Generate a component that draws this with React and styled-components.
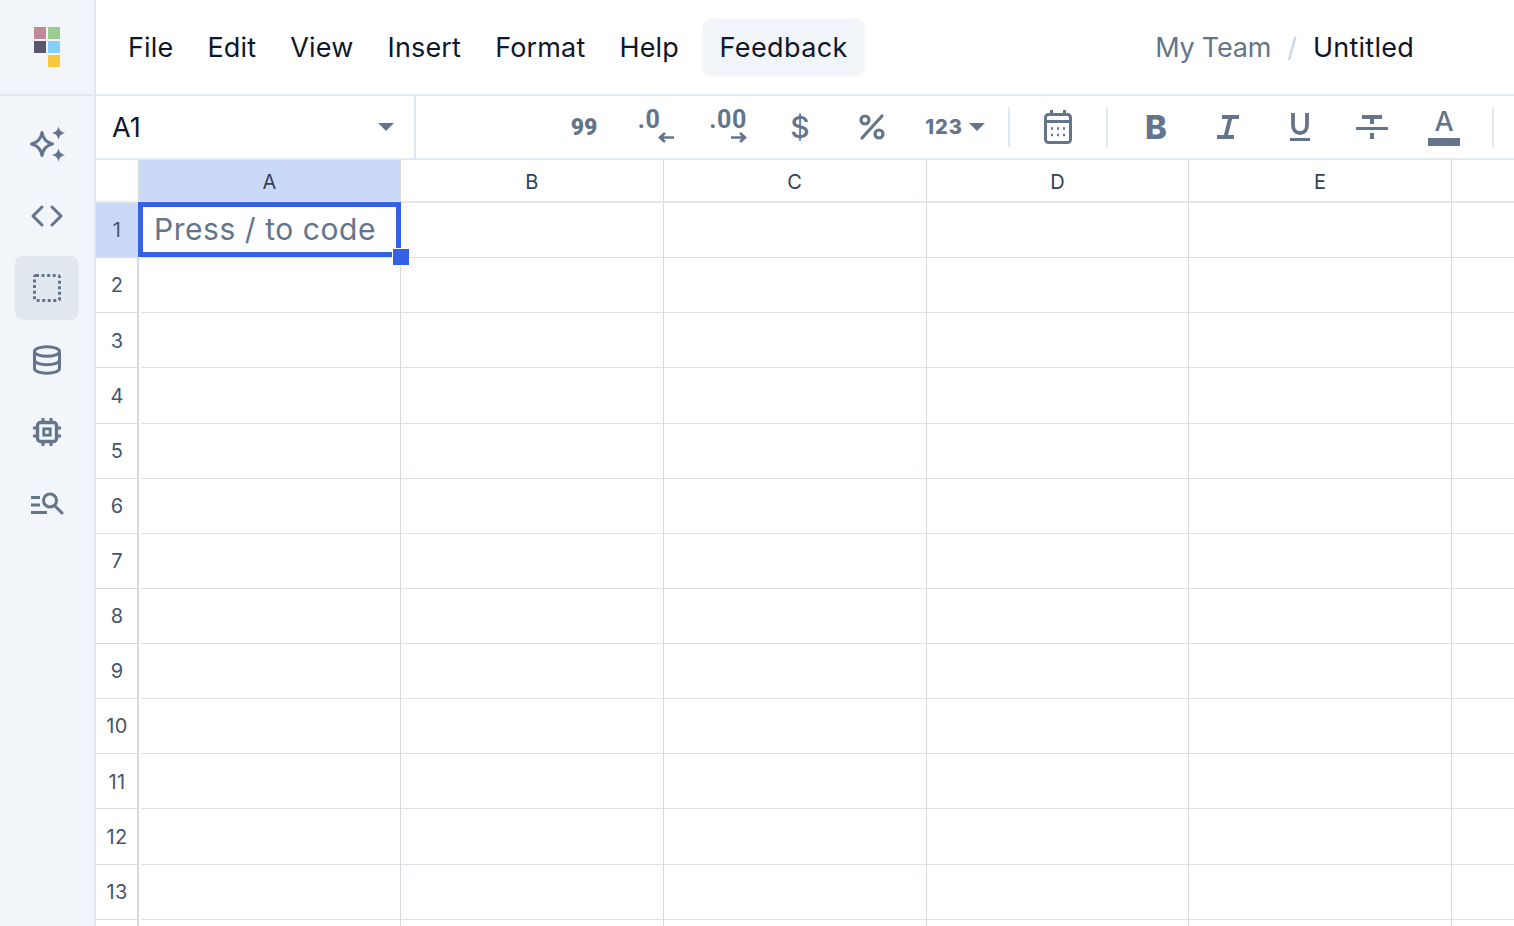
import React from 'react';
import styled, { createGlobalStyle } from 'styled-components';

const GlobalStyle = createGlobalStyle`
  html, body {
    margin: 0;
    padding: 0;
    height: 100%;
    overflow: hidden;
    background: #fff;
    font-family: Inter, "Liberation Sans", sans-serif;
  }
  * {
    box-sizing: border-box;
  }
`;

const Page = styled.div`
  display: flex;
  width: 100vw;
  height: 100vh;
  overflow: hidden;
`;

const Sidebar = styled.aside`
  flex: none;
  width: 96px;
  background: #f2f5fa;
  border-right: 2px solid #e2e8f0;
`;

const LogoArea = styled.div`
  display: flex;
  align-items: center;
  justify-content: center;
  height: 96px;
  border-bottom: 2px solid #e2e8f0;
`;

const LogoGrid = styled.div`
  display: grid;
  grid-template-columns: 12px 12px;
  grid-auto-rows: 12px;
  gap: 2px;
`;

const LogoSquare = styled.div`
  grid-column: ${(p) => p.$col || 'auto'};
  background: ${(p) => p.$color};
`;

const SideNav = styled.nav`
  display: flex;
  flex-direction: column;
  align-items: center;
  gap: 8px;
  padding-top: 16px;
`;

const SideButton = styled.div`
  display: flex;
  align-items: center;
  justify-content: center;
  width: 64px;
  height: 64px;
  border-radius: 8px;
  color: #64748b;
  background: ${(p) => (p.$active ? '#e2e8f0' : 'transparent')};
`;

const Main = styled.main`
  flex: 1;
  min-width: 0;
  display: flex;
  flex-direction: column;
`;

const TopBar = styled.header`
  flex: none;
  display: flex;
  align-items: center;
  justify-content: space-between;
  height: 96px;
  padding: 0 100px 0 15px;
  border-bottom: 2px solid #e2e8f0;
`;

const Menu = styled.div`
  display: flex;
  align-items: center;
`;

const MenuItem = styled.div`
  display: flex;
  align-items: center;
  height: 56px;
  padding: 0 17px;
  font-size: 27px;
  letter-spacing: 0.17px;
  color: #0f172a;
`;

const FeedbackButton = styled(MenuItem)`
  margin-left: 7px;
  padding: 0 16.500px;
  letter-spacing: 0.4px;
  border-radius: 8px;
  background: #f1f5f9;
  box-shadow: 0 1px 3px rgba(15, 23, 42, 0.06);
`;

const Crumbs = styled.div`
  display: flex;
  align-items: center;
  gap: 16px;
  font-size: 27px;
  color: #64748b;
`;

const CrumbTeam = styled.span`
  letter-spacing: -0.2px;
`;

const CrumbSep = styled.span`
  color: #cbd5e1;
`;

const CrumbTitle = styled.span`
  letter-spacing: 0.25px;
  color: #0f172a;
`;

const Toolbar = styled.div`
  flex: none;
  display: flex;
  align-items: center;
  height: 64px;
  border-bottom: 2px solid #e2e8f0;
`;

const NameBox = styled.div`
  flex: none;
  display: flex;
  align-items: center;
  justify-content: space-between;
  width: 320px;
  height: 100%;
  padding: 0 20px 0 16px;
  border-right: 2px solid #e2e8f0;
  font-size: 27px;
  color: #0f172a;
`;

const Caret = styled.span`
  width: 0;
  height: 0;
  border-left: 8px solid transparent;
  border-right: 8px solid transparent;
  border-top: 8px solid #64748b;
`;

const Tools = styled.div`
  display: flex;
  align-items: center;
  gap: 8px;
  padding-left: 136px;
`;

const Tool = styled.div`
  flex: none;
  display: flex;
  align-items: center;
  justify-content: center;
  gap: ${(p) => p.$gap || 0}px;
  width: ${(p) => p.$width || 64}px;
  height: 48px;
  padding-left: ${(p) => p.$inset || 0}px;
  color: #64748b;
`;

const Divider = styled.div`
  flex: none;
  width: 2px;
  height: 40px;
  margin: 0 8px;
  background: #e2e8f0;
`;

const GlyphText = styled.span`
  font-family: ${(p) => p.$font || 'Inter'}, "Liberation Sans", sans-serif;
  font-size: ${(p) => p.$size || 22}px;
  font-weight: ${(p) => p.$weight || 700};
  letter-spacing: ${(p) => p.$spacing || 0}px;
  line-height: 1;
`;

const NumberIcon = styled.div`
  display: flex;
  flex-direction: column;
  align-items: flex-end;
`;

const NumberText = styled.span`
  height: 16px;
  margin-right: ${(p) => p.$right || 0}px;
  font-family: Roboto, "Liberation Sans", sans-serif;
  font-size: 25px;
  font-weight: 700;
  letter-spacing: 0.5px;
  line-height: 16px;
`;

const ArrowIcon = styled.svg`
  display: block;
  margin-top: 4px;
`;

const TextColorIcon = styled.div`
  display: flex;
  flex-direction: column;
  align-items: center;
  width: 32px;
`;

const ColorBar = styled.div`
  width: 32px;
  height: 8px;
  margin-top: 3px;
  background: #64748b;
`;

const Sheet = styled.section`
  flex: 1;
  min-height: 0;
  overflow: hidden;
`;

const HeadRow = styled.div`
  display: flex;
  height: 43px;
  border-bottom: 2px solid #e2e8f0;
`;

const Corner = styled.div`
  flex: none;
  width: 43px;
  border-right: 1px solid #d6d9de;
`;

const ColHead = styled.div`
  flex: none;
  display: flex;
  align-items: center;
  justify-content: center;
  width: ${(p) => (p.$first ? 262 : 262.75)}px;
  padding-top: 2px;
  font-size: 20px;
  color: #334155;
  border-right: 1px solid #d6d9de;
  background: ${(p) => (p.$active ? '#cbd9f8' : 'transparent')};
`;

const Row = styled.div`
  display: flex;
  height: 55.13px;
`;

const RowHead = styled.div`
  flex: none;
  display: flex;
  align-items: center;
  justify-content: center;
  width: 43px;
  padding: 0.6px 0 0 1px;
  font-size: 20px;
  letter-spacing: 0.3px;
  color: #475569;
  border-right: 2px solid #d6d9de;
  border-bottom: 1px solid #d9dce1;
  background: ${(p) => (p.$active ? '#cbd9f8' : 'transparent')};
`;

const Cell = styled.div`
  flex: none;
  position: relative;
  width: ${(p) => (p.$first ? 262 : 262.75)}px;
  border-right: 1px solid #d6d9de;
  border-bottom: 1px solid #dcdfe4;

  /* small break in the row line right next to the row header */
  &::after {
    content: '';
    display: ${(p) => (p.$first ? 'block' : 'none')};
    position: absolute;
    left: 0;
    bottom: -1px;
    width: 2px;
    height: 1px;
    background: #fff;
  }
`;

const Filler = styled.div`
  flex: 1;
  border-bottom: 1px solid #dcdfe4;
`;

const Selection = styled.div`
  position: absolute;
  top: -1px;
  left: -1px;
  z-index: 1;
  display: flex;
  align-items: center;
  width: 263px;
  height: 55px;
  padding: 0 0 2px 11px;
  border: 5px solid #3461e6;
  font-size: 30px;
  letter-spacing: 0.55px;
  color: #64748b;
`;

const FillHandle = styled.div`
  position: absolute;
  right: -14px;
  bottom: -14px;
  width: 18px;
  height: 18px;
  background: #3461e6;
  border: 1px solid #fff;
`;

const Sparkles = () => (
  <svg width="36" height="36" viewBox="0 0 36 36" fill="none">
    <path d="M13 6.500c1 6.500 4 10 10.500 11.500C17 19.500 14 23 13 29.500 12 23 9 19.500 2.500 18 9 16.500 12 13 13 6.500z" stroke="currentColor" strokeWidth="3" strokeLinejoin="round" />
    <path d="M29.500.500c.7 3.500 2.500 5.500 6.500 6.500-4 1-5.800 3-6.500 6.500-.7-3.500-2.500-5.500-6.500-6.500 4-1 5.800-3 6.500-6.500zM29.500 22.500c.7 3.500 2.500 5.500 6.500 6.500-4 1-5.800 3-6.500 6.500-.7-3.500-2.500-5.500-6.500-6.500 4-1 5.800-3 6.500-6.500z" fill="currentColor" />
  </svg>
);

const CodeIcon = () => (
  <svg width="32" height="32" viewBox="0 0 32 32" fill="none" stroke="currentColor" strokeWidth="3" strokeLinecap="round" strokeLinejoin="round">
    <path d="M11 7l-9 9 9 9M21 7l9 9-9 9" />
  </svg>
);

const SelectIcon = () => (
  <svg width="32" height="32" viewBox="0 0 32 32" fill="none">
    <rect x="3.500" y="3.500" width="25" height="25" rx="1.500" stroke="currentColor" strokeWidth="3" strokeDasharray="3 2.550" />
  </svg>
);

const DatabaseIcon = () => (
  <svg width="32" height="32" viewBox="0 0 32 32" fill="none" stroke="currentColor" strokeWidth="3">
    <ellipse cx="16" cy="7.500" rx="12.500" ry="4.800" />
    <path d="M3.500 7.500v17c0 2.700 5.600 4.800 12.500 4.800s12.500-2.100 12.500-4.800v-17M3.500 16c0 2.700 5.600 4.800 12.500 4.800s12.500-2.100 12.500-4.800" />
  </svg>
);

const ChipIcon = () => (
  <svg width="32" height="32" viewBox="0 0 32 32" fill="none" stroke="currentColor" strokeWidth="3">
    <rect x="6.500" y="6.500" width="19" height="19" rx="3" strokeWidth="3.400" />
    <rect x="12.800" y="12.800" width="6.400" height="6.400" strokeWidth="2.800" />
    <path d="M12 2v4M20 2v4M12 26v4M20 26v4M2 12h4M2 20h4M26 12h4M26 20h4" />
  </svg>
);

const ListSearchIcon = () => (
  <svg width="36" height="32" viewBox="0 0 36 32" fill="none" stroke="currentColor" strokeWidth="3">
    <circle cx="21" cy="12.500" r="6.500" />
    <path d="M26 18l7 7" strokeLinecap="round" />
    <path d="M2 9.500h9M2 17h9M2 24.500h16" />
  </svg>
);

const ArrowLeft = () => (
  <ArrowIcon width="16" height="11" viewBox="0 0 16 11" fill="none" stroke="currentColor" strokeWidth="2.600">
    <path d="M16 5.500H2M7 1L2 5.500 7 10" />
  </ArrowIcon>
);

const ArrowRight = () => (
  <ArrowIcon width="16" height="11" viewBox="0 0 16 11" fill="none" stroke="currentColor" strokeWidth="2.600">
    <path d="M0 5.500h14M9 1l5 4.500L9 10" />
  </ArrowIcon>
);

const PercentIcon = () => (
  <svg width="32" height="32" viewBox="0 0 32 32" fill="none" stroke="currentColor" strokeWidth="3.200">
    <circle cx="9" cy="9" r="4" />
    <circle cx="23" cy="23" r="4" />
    <path d="M26 5L6 27" strokeLinecap="round" />
  </svg>
);

const CalendarIcon = () => (
  <svg width="32" height="36" viewBox="0 0 32 36" fill="none" stroke="currentColor" strokeWidth="3">
    <rect x="3.500" y="5.500" width="25" height="28" rx="3" />
    <path d="M3 12.500h26M9.500 1v5M22.500 1v5" />
    <path d="M9 19.500h2M15 19.500h2M21 19.500h2M9 26h2M15 26h2M21 26h2" strokeWidth="2.400" />
  </svg>
);

const ItalicIcon = () => (
  <svg width="32" height="32" viewBox="0 0 32 32" fill="none" stroke="currentColor" strokeWidth="4">
    <path d="M10 6h17M5 26h17M18.500 6l-5 20" />
  </svg>
);

const UnderlineIcon = () => (
  <svg width="32" height="32" viewBox="0 0 32 32" fill="none" stroke="currentColor">
    <path d="M9 2v12c0 5 3 8 7 8s7-3 7-8V2" strokeWidth="3.800" />
    <path d="M6 28.500h20" strokeWidth="3" />
  </svg>
);

const StrikeIcon = () => (
  <svg width="32" height="32" viewBox="0 0 32 32" fill="none" stroke="currentColor">
    <path d="M6 6h20M16 6v7M16 22v6" strokeWidth="4" />
    <path d="M0 17.500h32" strokeWidth="3" />
  </svg>
);

const menuItems = ['File', 'Edit', 'View', 'Insert', 'Format', 'Help'];
const columns = ['A', 'B', 'C', 'D', 'E'];
const rows = Array.from({ length: 14 }, (_, i) => i + 1);

export default function App() {
  return (
    <Page>
      <GlobalStyle />
      <Sidebar>
        <LogoArea>
          <LogoGrid>
            <LogoSquare $color="#c08a96" />
            <LogoSquare $color="#9bcb8f" />
            <LogoSquare $color="#5a5568" />
            <LogoSquare $color="#85cffb" />
            <LogoSquare $col={2} $color="#f8c93f" />
          </LogoGrid>
        </LogoArea>
        <SideNav>
          <SideButton><Sparkles /></SideButton>
          <SideButton><CodeIcon /></SideButton>
          <SideButton $active><SelectIcon /></SideButton>
          <SideButton><DatabaseIcon /></SideButton>
          <SideButton><ChipIcon /></SideButton>
          <SideButton><ListSearchIcon /></SideButton>
        </SideNav>
      </Sidebar>
      <Main>
        <TopBar>
          <Menu>
            {menuItems.map((item) => (
              <MenuItem key={item}>{item}</MenuItem>
            ))}
            <FeedbackButton>Feedback</FeedbackButton>
          </Menu>
          <Crumbs>
            <CrumbTeam>My Team</CrumbTeam>
            <CrumbSep>/</CrumbSep>
            <CrumbTitle>Untitled</CrumbTitle>
          </Crumbs>
        </TopBar>
        <Toolbar>
          <NameBox>
            A1
            <Caret />
          </NameBox>
          <Tools>
            <Tool><GlyphText $font="Roboto" $size={23} $weight={900}>99</GlyphText></Tool>
            <Tool>
              <NumberIcon>
                <NumberText $right={14}>.0</NumberText>
                <ArrowLeft />
              </NumberIcon>
            </Tool>
            <Tool>
              <NumberIcon>
                <NumberText>.00</NumberText>
                <ArrowRight />
              </NumberIcon>
            </Tool>
            <Tool><GlyphText $size={30} $weight={500}>$</GlyphText></Tool>
            <Tool><PercentIcon /></Tool>
            <Tool $width={80} $gap={6} $inset={6}>
              <GlyphText $size={20} $weight={800} $spacing={1}>123</GlyphText>
              <Caret />
            </Tool>
            <Divider />
            <Tool><CalendarIcon /></Tool>
            <Divider />
            <Tool><GlyphText $size={33} $weight={800}>B</GlyphText></Tool>
            <Tool><ItalicIcon /></Tool>
            <Tool><UnderlineIcon /></Tool>
            <Tool><StrikeIcon /></Tool>
            <Tool>
              <TextColorIcon>
                <GlyphText $size={27} $weight={500}>A</GlyphText>
                <ColorBar />
              </TextColorIcon>
            </Tool>
            <Divider />
          </Tools>
        </Toolbar>
        <Sheet>
          <HeadRow>
            <Corner />
            {columns.map((col, i) => (
              <ColHead key={col} $first={i === 0} $active={i === 0}>{col}</ColHead>
            ))}
          </HeadRow>
          {rows.map((row) => (
            <Row key={row}>
              {/* row 14 only peeks in at the bottom edge, its number is out of view */}
              <RowHead $active={row === 1}>{row < 14 ? row : null}</RowHead>
              {columns.map((col, i) => (
                <Cell key={col} $first={i === 0}>
                  {row === 1 && i === 0 ? (
                    <Selection>
                      Press / to code
                      <FillHandle />
                    </Selection>
                  ) : null}
                </Cell>
              ))}
              <Filler />
            </Row>
          ))}
        </Sheet>
      </Main>
    </Page>
  );
}
